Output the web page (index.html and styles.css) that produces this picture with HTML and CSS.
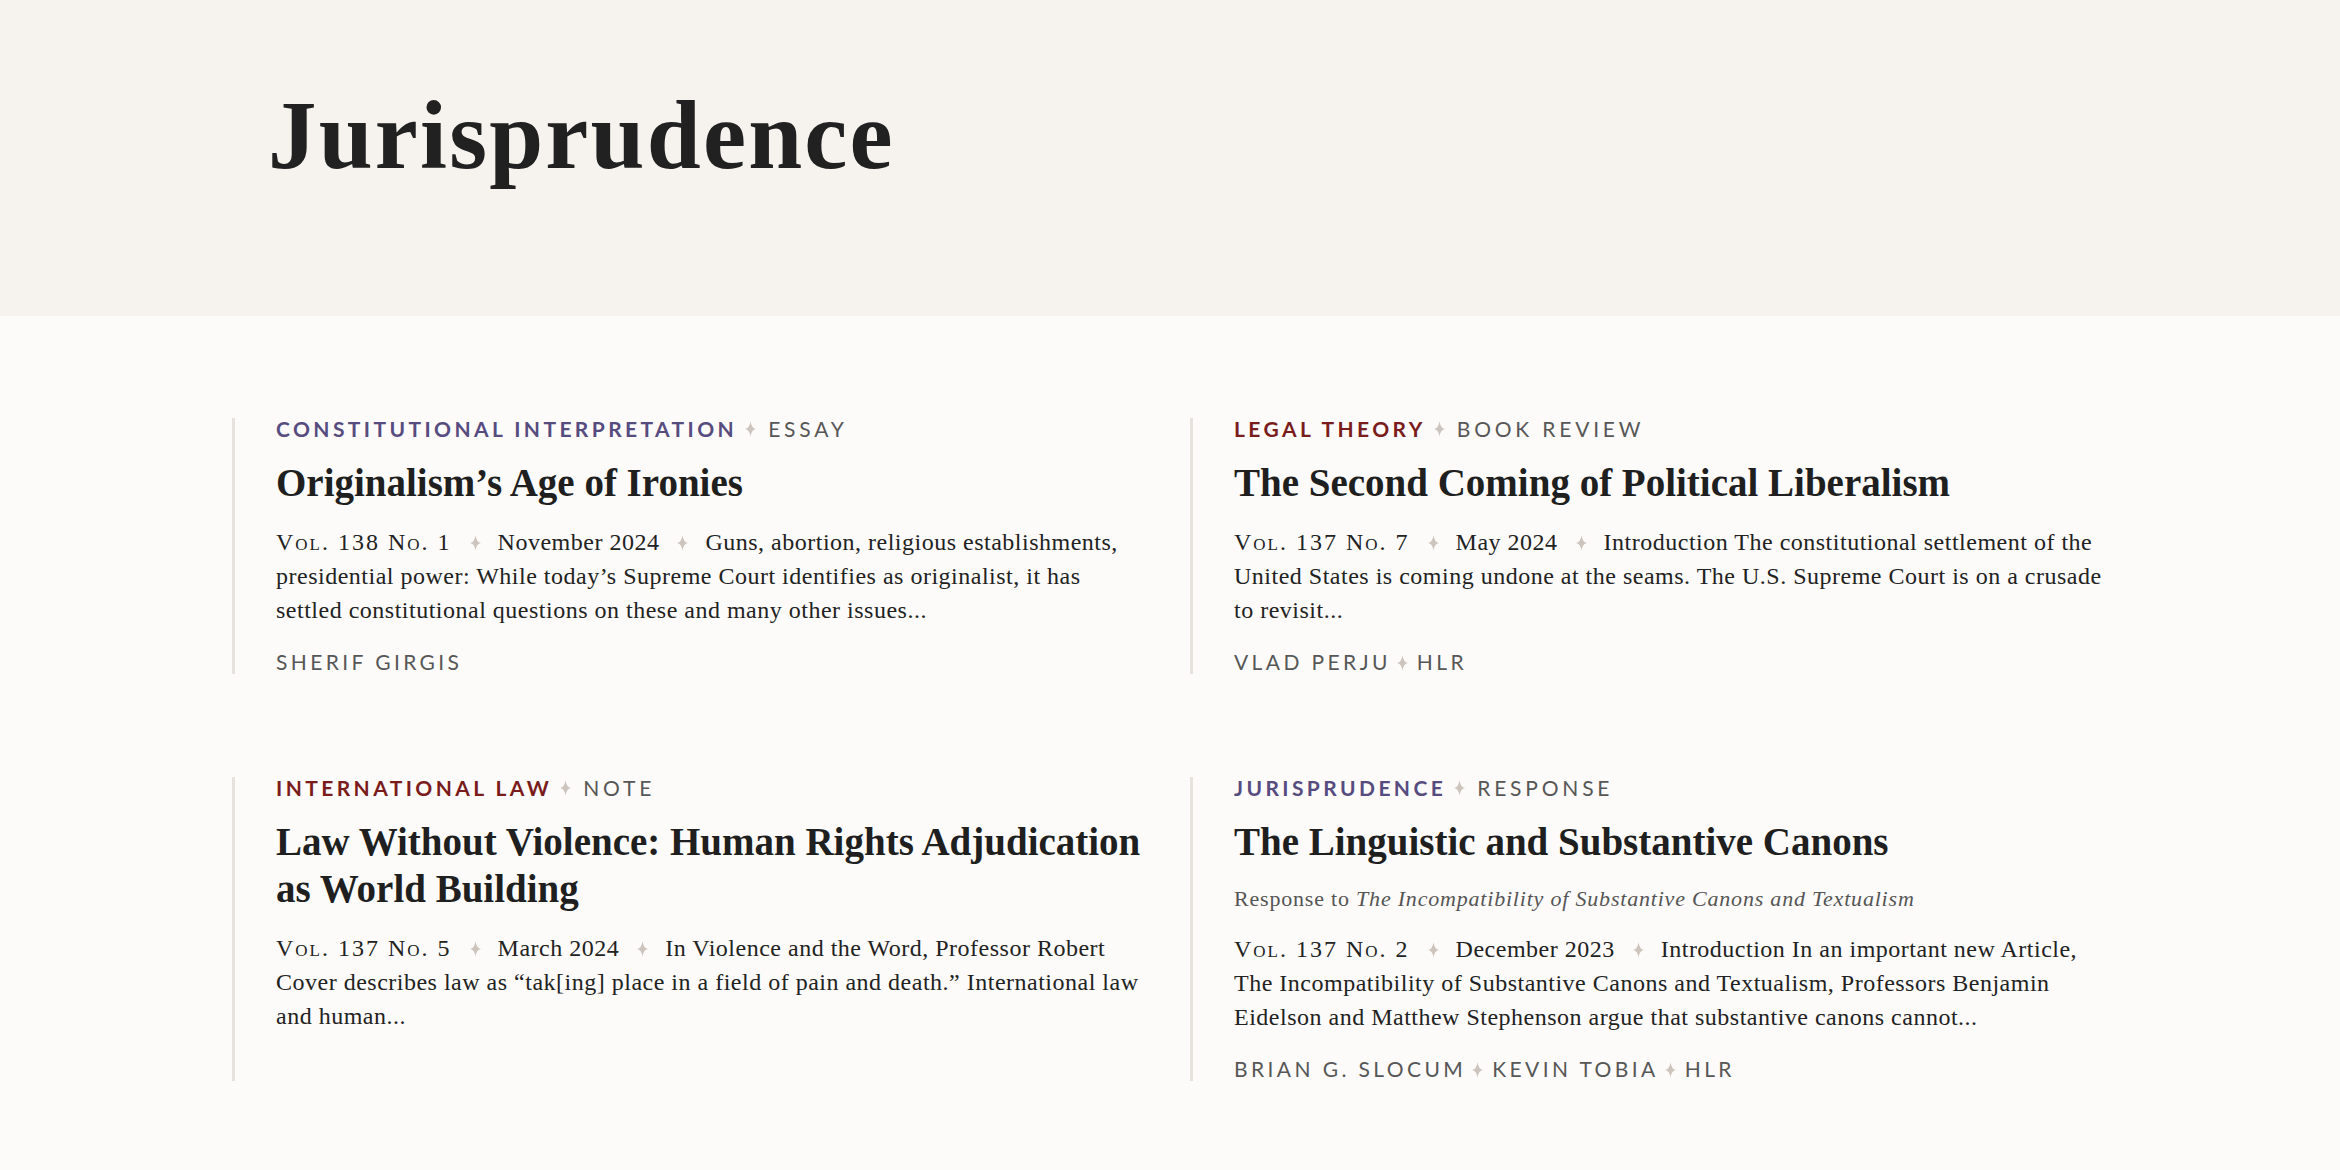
FILE: index.html
```html
<!DOCTYPE html>
<html lang="en">
<head>
    <meta charset="UTF-8">
    <meta name="viewport" content="width=device-width, initial-scale=1.0">
    <title>Jurisprudence</title>
    <link rel="stylesheet" href="styles.css">
</head>
<body>
    <header class="masthead">
        <div class="wrap">
            <h1 class="page-title">Jurisprudence</h1>
        </div>
    </header>
    <main class="listing wrap">
        <article class="card">
            <div class="kicker">
                <span class="topic purple">Constitutional Interpretation</span>
                <svg class="sep" viewBox="0 0 10 14"><path d="M5 0Q5.8 6.2 10 7Q5.8 7.8 5 14Q4.2 7.8 0 7Q4.2 6.2 5 0Z"/></svg>
                <span class="kind">Essay</span>
            </div>
            <h2 class="card-title">Originalism’s Age of Ironies</h2>
            <p class="summary">
                <span class="issue">Vol. 138 No. 1</span><svg class="sep" viewBox="0 0 10 14"><path d="M5 0Q5.8 6.2 10 7Q5.8 7.8 5 14Q4.2 7.8 0 7Q4.2 6.2 5 0Z"/></svg>November 2024<svg class="sep" viewBox="0 0 10 14"><path d="M5 0Q5.8 6.2 10 7Q5.8 7.8 5 14Q4.2 7.8 0 7Q4.2 6.2 5 0Z"/></svg>Guns, abortion, religious establishments, presidential power: While today’s Supreme Court identifies as originalist, it has settled constitutional questions on these and many other issues...
            </p>
            <div class="authors">Sherif Girgis</div>
        </article>
        <article class="card">
            <div class="kicker">
                <span class="topic red">Legal Theory</span>
                <svg class="sep" viewBox="0 0 10 14"><path d="M5 0Q5.8 6.2 10 7Q5.8 7.8 5 14Q4.2 7.8 0 7Q4.2 6.2 5 0Z"/></svg>
                <span class="kind">Book Review</span>
            </div>
            <h2 class="card-title">The Second Coming of Political Liberalism</h2>
            <p class="summary">
                <span class="issue">Vol. 137 No. 7</span><svg class="sep" viewBox="0 0 10 14"><path d="M5 0Q5.8 6.2 10 7Q5.8 7.8 5 14Q4.2 7.8 0 7Q4.2 6.2 5 0Z"/></svg>May 2024<svg class="sep" viewBox="0 0 10 14"><path d="M5 0Q5.8 6.2 10 7Q5.8 7.8 5 14Q4.2 7.8 0 7Q4.2 6.2 5 0Z"/></svg>Introduction The constitutional settlement of the United States is coming undone at the seams. The U.S. Supreme Court is on a crusade to revisit...
            </p>
            <div class="authors">Vlad Perju<svg class="sep" viewBox="0 0 10 14"><path d="M5 0Q5.8 6.2 10 7Q5.8 7.8 5 14Q4.2 7.8 0 7Q4.2 6.2 5 0Z"/></svg>HLR</div>
        </article>
        <article class="card">
            <div class="kicker">
                <span class="topic red">International Law</span>
                <svg class="sep" viewBox="0 0 10 14"><path d="M5 0Q5.8 6.2 10 7Q5.8 7.8 5 14Q4.2 7.8 0 7Q4.2 6.2 5 0Z"/></svg>
                <span class="kind">Note</span>
            </div>
            <h2 class="card-title">Law Without Violence: Human Rights Adjudication as World Building</h2>
            <p class="summary">
                <span class="issue">Vol. 137 No. 5</span><svg class="sep" viewBox="0 0 10 14"><path d="M5 0Q5.8 6.2 10 7Q5.8 7.8 5 14Q4.2 7.8 0 7Q4.2 6.2 5 0Z"/></svg>March 2024<svg class="sep" viewBox="0 0 10 14"><path d="M5 0Q5.8 6.2 10 7Q5.8 7.8 5 14Q4.2 7.8 0 7Q4.2 6.2 5 0Z"/></svg>In Violence and the Word, Professor Robert Cover describes law as “tak[ing] place in a field of pain and death.” International law and human...
            </p>
        </article>
        <article class="card">
            <div class="kicker">
                <span class="topic purple">Jurisprudence</span>
                <svg class="sep" viewBox="0 0 10 14"><path d="M5 0Q5.8 6.2 10 7Q5.8 7.8 5 14Q4.2 7.8 0 7Q4.2 6.2 5 0Z"/></svg>
                <span class="kind">Response</span>
            </div>
            <h2 class="card-title">The Linguistic and Substantive Canons</h2>
            <p class="response">Response to <em>The Incompatibility of Substantive Canons and Textualism</em></p>
            <p class="summary">
                <span class="issue">Vol. 137 No. 2</span><svg class="sep" viewBox="0 0 10 14"><path d="M5 0Q5.8 6.2 10 7Q5.8 7.8 5 14Q4.2 7.8 0 7Q4.2 6.2 5 0Z"/></svg>December 2023<svg class="sep" viewBox="0 0 10 14"><path d="M5 0Q5.8 6.2 10 7Q5.8 7.8 5 14Q4.2 7.8 0 7Q4.2 6.2 5 0Z"/></svg>Introduction In an important new Article, The Incompatibility of Substantive Canons and Textualism, Professors Benjamin Eidelson and Matthew Stephenson argue that substantive canons cannot...
            </p>
            <div class="authors">Brian G. Slocum<svg class="sep" viewBox="0 0 10 14"><path d="M5 0Q5.8 6.2 10 7Q5.8 7.8 5 14Q4.2 7.8 0 7Q4.2 6.2 5 0Z"/></svg>Kevin Tobia<svg class="sep" viewBox="0 0 10 14"><path d="M5 0Q5.8 6.2 10 7Q5.8 7.8 5 14Q4.2 7.8 0 7Q4.2 6.2 5 0Z"/></svg>HLR</div>
        </article>
    </main>
</body>
</html>
```

FILE: styles.css
```css
body {
    margin: 0;
    background-color: #fcfbf9;
    color: #222;
    font-family: "Liberation Serif", "Times New Roman", serif;
}
.wrap {
    max-width: 1876px;
    margin: 0 auto;
    box-sizing: border-box;
}
.masthead {
    background-color: #f6f3ee;
    padding: 87px 0 132px;
}
.masthead .wrap {
    padding-left: 36px;
}
.page-title {
    margin: 0;
    font-size: 97px;
    line-height: 1;
    font-weight: 700;
    letter-spacing: 2.2px;
    color: #212121;
}
.listing {
    display: grid;
    grid-template-columns: 1fr 1fr;
    column-gap: 40px;
    row-gap: 103px;
    padding: 102px 0 80px;
}
.card {
    border-left: 3px solid #e8e2dc;
    padding-left: 41px;
}
.kicker {
    font-family: Lato, "Liberation Sans", sans-serif;
    font-size: 21px;
    line-height: 1;
    text-transform: uppercase;
    letter-spacing: 3.4px;
    margin-bottom: 20px;
    display: flex;
    align-items: center;
}
.topic {
    font-weight: 700;
}
.topic.purple {
    color: #574c7f;
}
.topic.red {
    color: #7b1c1c;
}
.kind {
    color: #575757;
    letter-spacing: 3.8px;
}
.sep {
    width: 11px;
    height: 16px;
    fill: #cdc5bd;
    flex: none;
}
.kicker .sep {
    margin: 0 12px 0 8px;
}
.card-title {
    margin: 0 0 19px;
    font-size: 39px;
    line-height: 47px;
    font-weight: 700;
    color: #1f1f1f;
}
.response {
    margin: 4px 0 18px;
    font-size: 22px;
    line-height: 30px;
    letter-spacing: 0.8px;
    color: #555;
}
.summary {
    margin: 0;
    font-size: 24px;
    line-height: 34px;
    letter-spacing: 0.5px;
    color: #222;
}
.summary .sep {
    margin: 0 17px 0 18px;
    vertical-align: -1px;
}
.issue {
    font-variant: small-caps;
    letter-spacing: 2px;
}
.authors {
    margin-top: 22px;
    font-family: Lato, "Liberation Sans", sans-serif;
    font-size: 21px;
    line-height: 25px;
    text-transform: uppercase;
    letter-spacing: 3.4px;
    color: #575757;
}
.authors .sep {
    margin: 0 9px 0 6px;
    vertical-align: -1px;
}
```
